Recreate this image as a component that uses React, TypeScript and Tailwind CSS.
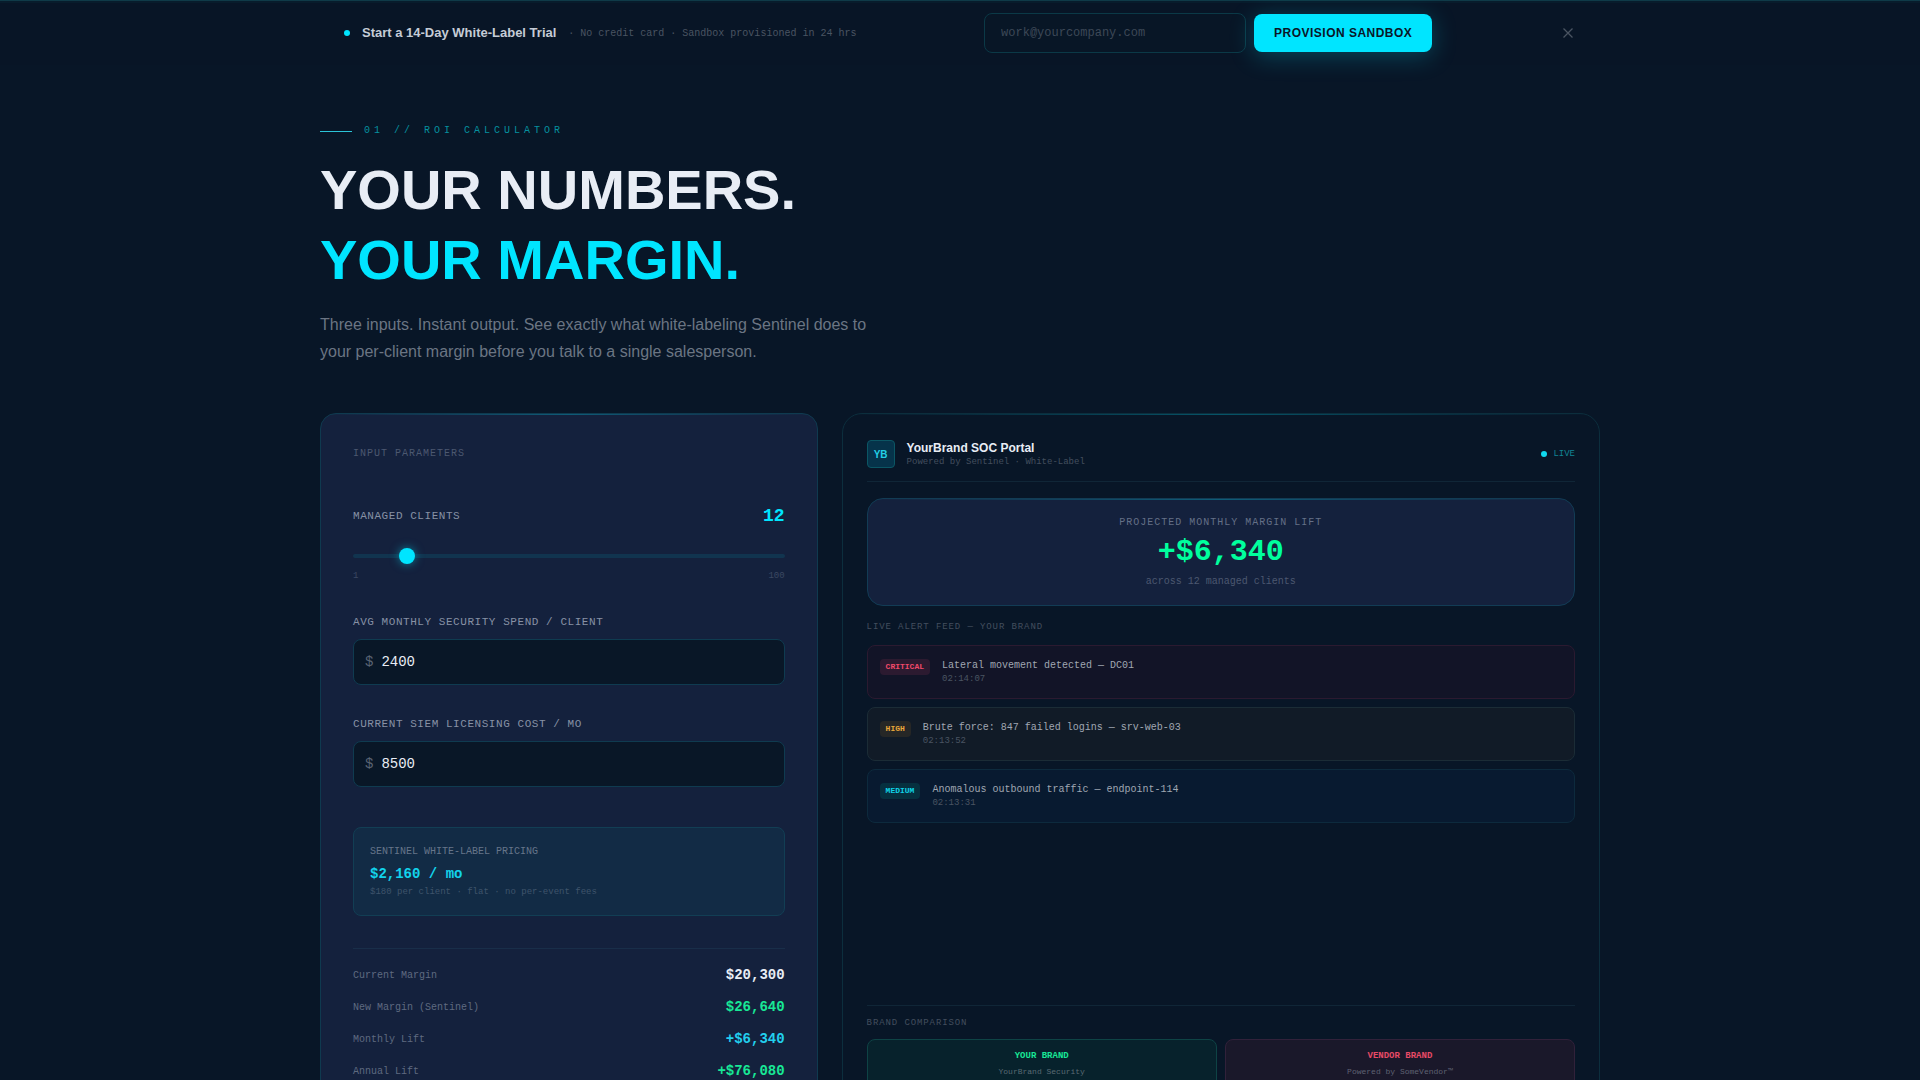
import { useState } from 'react';
import type { ReactNode } from 'react';
import clsx from 'clsx';

const SANS = "font-['Liberation_Sans',Arial,sans-serif]";
const MONO = "font-['Liberation_Mono','Courier_New',monospace]";

const PRICE_PER_CLIENT = 180;

const alerts = [
  {
    level: 'CRITICAL',
    message: 'Lateral movement detected — DC01',
    time: '02:14:07',
    row: 'bg-[#121427] border-[#2b1a30]',
    tag: 'bg-[#2c1a30] text-[#f0496a]',
  },
  {
    level: 'HIGH',
    message: 'Brute force: 847 failed logins — srv-web-03',
    time: '02:13:52',
    row: 'bg-[#111b27] border-[#1b2c36]',
    tag: 'bg-[#262726] text-[#e9a83a]',
  },
  {
    level: 'MEDIUM',
    message: 'Anomalous outbound traffic — endpoint-114',
    time: '02:13:31',
    row: 'bg-[#081a30] border-[#0d2a3d]',
    tag: 'bg-[#06303f] text-[#10d3e8]',
  },
];

const usd = (n: number) => `$${n.toLocaleString('en-US')}`;

function TrialBar() {
  return (
    <div className="border-t border-[#0f3a48] bg-[#081526] shadow-[inset_0_2px_0_#081c2c]">
      <div className="mx-auto flex max-w-7xl items-center justify-between px-6 py-3">
        <div className="flex items-center gap-3">
          <span className="size-1.5 rounded-full bg-[#00e5ff]" />
          <span className="text-[13px] font-bold text-[#c5ccd6]">
            Start a 14-Day White-Label Trial
          </span>
          <span className={clsx(MONO, 'text-[10px] text-[#4a5462]')}>
            · No credit card · Sandbox provisioned in 24 hrs
          </span>
        </div>

        <form className="flex items-center gap-2" onSubmit={(e) => e.preventDefault()}>
          <input
            type="email"
            aria-label="Work email"
            placeholder="work@yourcompany.com"
            className={clsx(
              MONO,
              'h-10 w-[262px] rounded-lg border border-[#0b3947] bg-[#081626] px-4 text-xs text-white placeholder:text-[#3d4857] focus:outline-none',
            )}
          />
          <button className="h-[38px] rounded-lg bg-[#00e5ff] px-5 text-xs font-bold tracking-[0.04em] text-[#0a1628] shadow-[0_4px_24px_rgba(0,229,255,0.25)]">
            PROVISION SANDBOX
          </button>
        </form>

        {/* dismiss */}
        <button aria-label="Dismiss" className="flex size-4 items-center justify-center">
          <svg viewBox="0 0 10 10" className="size-2.5 stroke-[#4a5462]" fill="none">
            <path d="M0.5 0.5 L9.5 9.5 M9.5 0.5 L0.5 9.5" strokeWidth="1.3" />
          </svg>
        </button>
      </div>
    </div>
  );
}

type MoneyFieldProps = {
  id: string;
  label: string;
  value: number;
  onChange: (n: number) => void;
};

function MoneyField({ id, label, value, onChange }: MoneyFieldProps) {
  return (
    <div>
      <label htmlFor={id} className="block text-[11px] leading-4 tracking-wider text-[#8791a5]">
        {label}
      </label>
      <div className="mt-[9px] flex h-[46px] items-center gap-2 rounded-lg border border-[#0f3b50] bg-[#091727] px-[11px] text-sm">
        <span className="text-[#5a6474]">$</span>
        <input
          id={id}
          type="text"
          inputMode="numeric"
          value={value}
          onChange={(e) => onChange(Number(e.target.value) || 0)}
          className="w-full bg-transparent text-[#e8edf5] focus:outline-none"
        />
      </div>
    </div>
  );
}

type ResultRowProps = { label: string; value: string; color: string };

function ResultRow({ label, value, color }: ResultRowProps) {
  return (
    <div className="flex h-5 items-center justify-between">
      <span className="text-[10px] text-[#5f6a80]">{label}</span>
      <span className={clsx('text-sm font-bold', color)}>{value}</span>
    </div>
  );
}

function TopGlow() {
  return (
    <div className="absolute inset-x-0 top-0 h-px bg-linear-to-r from-transparent via-[#00e5ff]/30 to-transparent" />
  );
}

function SectionLabel({ children }: { children: ReactNode }) {
  return <h3 className="text-[9px] leading-3 tracking-widest text-[#434e5e]">{children}</h3>;
}

function App() {
  const [clients, setClients] = useState(12);
  const [spend, setSpend] = useState(2400);
  const [siem, setSiem] = useState(8500);

  const pricing = clients * PRICE_PER_CLIENT;
  const currentMargin = clients * spend - siem;
  const newMargin = clients * spend - pricing;
  const lift = newMargin - currentMargin;

  return (
    <div className={clsx(SANS, 'h-screen overflow-hidden bg-[#081627] text-[#e8edf5]')}>
      <TrialBar />

      <main className="mx-auto max-w-7xl pt-[58px]">
        <div className="flex items-center gap-3">
          <span className="h-px w-8 bg-[#2bc4d8]" />
          <span className={clsx(MONO, 'text-[10px] leading-4 tracking-[0.4em] text-[#06909f]')}>
            01 // ROI CALCULATOR
          </span>
        </div>
        <h1 className="mt-4 text-[56px] leading-[70px] font-bold text-[#e8edf5]">
          YOUR NUMBERS.
          <br />
          <span className="text-[#00e5ff]">YOUR MARGIN.</span>
        </h1>
        <p className="mt-4 max-w-xl text-base leading-[27px] text-[#6b7583]">
          Three inputs. Instant output. See exactly what white-labeling Sentinel does to your
          per-client margin before you talk to a single salesperson.
        </p>

        <div className={clsx(MONO, 'mt-12 grid grid-cols-5 gap-6')}>
          {/* inputs */}
          <section className="relative col-span-2 h-[720px] overflow-hidden rounded-2xl border border-[#0f3a4f] bg-[#14213d] p-8">
            <TopGlow />
            <h2 className="text-[10px] leading-4 tracking-widest text-[#4c5870]">
              INPUT PARAMETERS
            </h2>

            <div className="mt-10 flex items-center justify-between">
              <label
                htmlFor="clients"
                className="text-[11px] leading-4 tracking-wider text-[#8791a5]"
              >
                MANAGED CLIENTS
              </label>
              <output htmlFor="clients" className="text-lg font-bold text-[#00e5ff]">
                {clients}
              </output>
            </div>
            <input
              id="clients"
              type="range"
              min={1}
              max={100}
              value={clients}
              onChange={(e) => setClients(Number(e.target.value))}
              className="mt-6 block h-1 w-full cursor-pointer appearance-none rounded-xs bg-[#11344f] [&::-webkit-slider-thumb]:size-4 [&::-webkit-slider-thumb]:appearance-none [&::-webkit-slider-thumb]:rounded-full [&::-webkit-slider-thumb]:bg-[#00e5ff] [&::-webkit-slider-thumb]:shadow-[0_0_10px_rgba(0,229,255,0.5)]"
            />
            <div className="mt-3 mb-8 flex justify-between text-[9px] leading-3 text-[#3b4862]">
              <span>1</span>
              <span>100</span>
            </div>

            <MoneyField
              id="spend"
              label="AVG MONTHLY SECURITY SPEND / CLIENT"
              value={spend}
              onChange={setSpend}
            />
            <div className="mt-[31px]">
              <MoneyField
                id="siem"
                label="CURRENT SIEM LICENSING COST / MO"
                value={siem}
                onChange={setSiem}
              />
            </div>

            <div className="mt-10 h-[89px] rounded-lg border border-[#123e54] bg-[#122b45] px-4 pt-4">
              <p className="text-[10px] leading-4 text-[#66758a]">SENTINEL WHITE-LABEL PRICING</p>
              <p className="mt-0.5 text-sm leading-6 font-bold text-[#12d3ec]">
                {usd(pricing)} / mo
              </p>
              <p className="text-[9px] leading-3 text-[#3f546b]">
                ${PRICE_PER_CLIENT} per client · flat · no per-event fees
              </p>
            </div>

            <div className="mt-8 flex flex-col gap-3 border-t border-[#192e49] pt-4">
              <ResultRow label="Current Margin" value={usd(currentMargin)} color="text-[#e8edf5]" />
              <ResultRow
                label="New Margin (Sentinel)"
                value={usd(newMargin)}
                color="text-[#18e896]"
              />
              <ResultRow label="Monthly Lift" value={`+${usd(lift)}`} color="text-[#22cfee]" />
              <ResultRow label="Annual Lift" value={`+${usd(lift * 12)}`} color="text-[#18e896]" />
            </div>
          </section>

          {/* portal preview */}
          <section className="relative col-span-3 flex h-[720px] flex-col overflow-hidden rounded-[20px] border border-[#0c2e3d] bg-[#081627] px-6 pt-[26px]">
            <TopGlow />
            <div className="flex items-center justify-between border-b border-[#102637] pb-[13px]">
              <div className="flex items-center gap-3">
                <span
                  className={clsx(
                    SANS,
                    'flex size-7 items-center justify-center rounded-sm border border-[#0b5664] bg-[#06334a] text-[10px] font-bold text-[#22cfe6]',
                  )}
                >
                  YB
                </span>
                <div>
                  <p className={clsx(SANS, 'text-xs leading-4 font-bold text-[#e8edf5]')}>
                    YourBrand SOC Portal
                  </p>
                  <p className="text-[9px] leading-3 text-[#434e5e]">
                    Powered by Sentinel · White-Label
                  </p>
                </div>
              </div>
              <div className="flex items-center gap-1.5">
                <span className="size-1.5 rounded-full bg-[#10d8ee]" />
                <span className="text-[9px] leading-3 text-[#118493]">LIVE</span>
              </div>
            </div>

            <div className="relative mt-4 h-[108px] shrink-0 overflow-hidden rounded-2xl border border-[#123c55] bg-[#14213d] pt-[17px] text-center">
              <TopGlow />
              <p className="text-[10px] leading-3.5 tracking-widest text-[#647087]">
                PROJECTED MONTHLY MARGIN LIFT
              </p>
              <p className="mt-[3px] text-3xl leading-[38px] font-bold text-[#00ff9d]">
                +{usd(lift)}
              </p>
              <p className="mt-[3px] text-[10px] leading-4 text-[#4c5870]">
                across {clients} managed clients
              </p>
            </div>

            <div className="mt-[15px]">
              <SectionLabel>LIVE ALERT FEED — YOUR BRAND</SectionLabel>
            </div>
            <ul className="mt-3 flex flex-col gap-2">
              {alerts.map((a) => (
                <li
                  key={a.level}
                  className={clsx(
                    'flex h-[54px] items-start gap-3 rounded-lg border px-3 pt-[13px]',
                    a.row,
                  )}
                >
                  <span
                    className={clsx(
                      'rounded-sm px-1.5 py-0.5 text-[8px] leading-3 font-bold',
                      a.tag,
                    )}
                  >
                    {a.level}
                  </span>
                  <div>
                    <p className="text-[10px] leading-3.5 text-[#a0a7b2]">{a.message}</p>
                    <p className="text-[9px] leading-3 text-[#4a5462]">{a.time}</p>
                  </div>
                </li>
              ))}
            </ul>

            <div className="mt-[182px] border-t border-[#102637] pt-[11px]">
              <SectionLabel>BRAND COMPARISON</SectionLabel>
              <div className="mt-2.5 grid grid-cols-2 gap-2 text-center">
                <div className="h-20 rounded-lg border border-[#0e4345] bg-[#07222c] pt-2.5">
                  <p className="text-[9px] leading-3 font-bold text-[#18e896]">YOUR BRAND</p>
                  <p className="mt-1 text-[8px] leading-3 text-[#5a6a73]">YourBrand Security</p>
                </div>
                <div className="h-20 rounded-lg border border-[#31213a] bg-[#1a182a] pt-2.5">
                  <p className="text-[9px] leading-3 font-bold text-[#e84a66]">VENDOR BRAND</p>
                  <p className="mt-1 text-[8px] leading-3 text-[#5f6272]">Powered by SomeVendor™</p>
                </div>
              </div>
            </div>
          </section>
        </div>
      </main>
    </div>
  );
}

export default App;
